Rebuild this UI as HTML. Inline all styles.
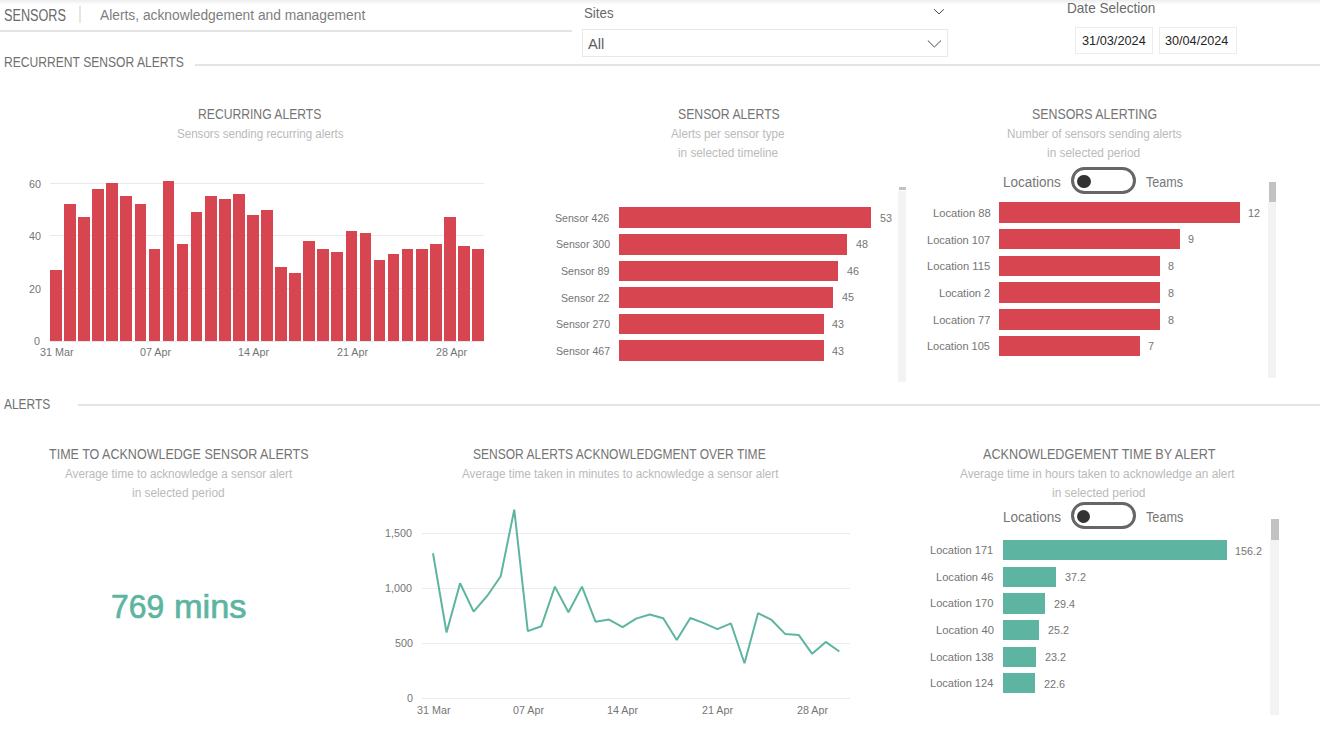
<!DOCTYPE html>
<html><head><meta charset="utf-8"><style>
html,body{margin:0;padding:0;width:1320px;height:740px;overflow:hidden;background:#fff;position:relative}
span{position:absolute;white-space:nowrap;font-family:"Liberation Sans",sans-serif;transform-origin:0 0}
</style></head><body>
<div style="position:absolute;left:0;top:0;width:1320px;height:5px;background:linear-gradient(#eeeeee,#ffffff)"></div>
<div style="position:absolute;left:78.50px;top:6.00px;width:2.00px;height:17.00px;background:#e6e6e6;"></div>
<div style="position:absolute;left:0.00px;top:30.00px;width:572.00px;height:2.00px;background:#e4e4e4;"></div>
<svg style="position:absolute;left:930px;top:5px" width="20" height="12"><polyline points="4.1,4.3 9,8.9 13.9,4.3" fill="none" stroke="#4a4a4a" stroke-width="1"/></svg>
<div style="position:absolute;left:582px;top:28.5px;width:363.5px;height:26.5px;border:1px solid #e8e8e8;background:#fff"></div>
<svg style="position:absolute;left:924px;top:36px" width="22" height="14"><polyline points="3.8,4.5 10.4,11 17,4.5" fill="none" stroke="#4a4a4a" stroke-width="1"/></svg>
<div style="position:absolute;left:1075px;top:27px;width:75.5px;height:25px;border:1px solid #ececec"></div>
<div style="position:absolute;left:1159px;top:27px;width:75.5px;height:25px;border:1px solid #ececec"></div>
<div style="position:absolute;left:195.00px;top:64.00px;width:1125.00px;height:2.00px;background:#e4e4e4;"></div>
<div style="position:absolute;left:78.00px;top:404.00px;width:1242.00px;height:2.00px;background:#e4e4e4;"></div>
<div style="position:absolute;left:50.00px;top:182.80px;width:434.00px;height:1.00px;background:#e9e9e9;"></div>
<div style="position:absolute;left:50.00px;top:235.40px;width:434.00px;height:1.00px;background:#e9e9e9;"></div>
<div style="position:absolute;left:50.00px;top:287.90px;width:434.00px;height:1.00px;background:#e9e9e9;"></div>
<div style="position:absolute;left:50.00px;top:340.50px;width:434.00px;height:1.00px;background:#e9e9e9;"></div>
<div style="position:absolute;left:50.10px;top:270.04px;width:11.70px;height:70.96px;background:#D64550;"></div>
<div style="position:absolute;left:64.17px;top:204.34px;width:11.70px;height:136.66px;background:#D64550;"></div>
<div style="position:absolute;left:78.23px;top:217.48px;width:11.70px;height:123.52px;background:#D64550;"></div>
<div style="position:absolute;left:92.30px;top:188.58px;width:11.70px;height:152.42px;background:#D64550;"></div>
<div style="position:absolute;left:106.37px;top:183.32px;width:11.70px;height:157.68px;background:#D64550;"></div>
<div style="position:absolute;left:120.44px;top:196.46px;width:11.70px;height:144.54px;background:#D64550;"></div>
<div style="position:absolute;left:134.50px;top:204.34px;width:11.70px;height:136.66px;background:#D64550;"></div>
<div style="position:absolute;left:148.57px;top:249.02px;width:11.70px;height:91.98px;background:#D64550;"></div>
<div style="position:absolute;left:162.64px;top:180.69px;width:11.70px;height:160.31px;background:#D64550;"></div>
<div style="position:absolute;left:176.70px;top:243.76px;width:11.70px;height:97.24px;background:#D64550;"></div>
<div style="position:absolute;left:190.77px;top:212.23px;width:11.70px;height:128.77px;background:#D64550;"></div>
<div style="position:absolute;left:204.84px;top:196.46px;width:11.70px;height:144.54px;background:#D64550;"></div>
<div style="position:absolute;left:218.90px;top:199.09px;width:11.70px;height:141.91px;background:#D64550;"></div>
<div style="position:absolute;left:232.97px;top:193.83px;width:11.70px;height:147.17px;background:#D64550;"></div>
<div style="position:absolute;left:247.04px;top:214.86px;width:11.70px;height:126.14px;background:#D64550;"></div>
<div style="position:absolute;left:261.11px;top:209.60px;width:11.70px;height:131.40px;background:#D64550;"></div>
<div style="position:absolute;left:275.17px;top:267.42px;width:11.70px;height:73.58px;background:#D64550;"></div>
<div style="position:absolute;left:289.24px;top:272.67px;width:11.70px;height:68.33px;background:#D64550;"></div>
<div style="position:absolute;left:303.31px;top:241.14px;width:11.70px;height:99.86px;background:#D64550;"></div>
<div style="position:absolute;left:317.37px;top:249.02px;width:11.70px;height:91.98px;background:#D64550;"></div>
<div style="position:absolute;left:331.44px;top:251.65px;width:11.70px;height:89.35px;background:#D64550;"></div>
<div style="position:absolute;left:345.51px;top:230.62px;width:11.70px;height:110.38px;background:#D64550;"></div>
<div style="position:absolute;left:359.57px;top:233.25px;width:11.70px;height:107.75px;background:#D64550;"></div>
<div style="position:absolute;left:373.64px;top:259.53px;width:11.70px;height:81.47px;background:#D64550;"></div>
<div style="position:absolute;left:387.71px;top:254.28px;width:11.70px;height:86.72px;background:#D64550;"></div>
<div style="position:absolute;left:401.78px;top:249.02px;width:11.70px;height:91.98px;background:#D64550;"></div>
<div style="position:absolute;left:415.84px;top:249.02px;width:11.70px;height:91.98px;background:#D64550;"></div>
<div style="position:absolute;left:429.91px;top:243.76px;width:11.70px;height:97.24px;background:#D64550;"></div>
<div style="position:absolute;left:443.98px;top:217.48px;width:11.70px;height:123.52px;background:#D64550;"></div>
<div style="position:absolute;left:458.04px;top:246.39px;width:11.70px;height:94.61px;background:#D64550;"></div>
<div style="position:absolute;left:472.11px;top:249.02px;width:11.70px;height:91.98px;background:#D64550;"></div>
<div style="position:absolute;left:619.10px;top:207.30px;width:252.00px;height:20.70px;background:#D64550;"></div>
<div style="position:absolute;left:619.10px;top:233.90px;width:228.23px;height:20.70px;background:#D64550;"></div>
<div style="position:absolute;left:619.10px;top:260.50px;width:218.72px;height:20.70px;background:#D64550;"></div>
<div style="position:absolute;left:619.10px;top:287.10px;width:213.96px;height:20.70px;background:#D64550;"></div>
<div style="position:absolute;left:619.10px;top:313.70px;width:204.45px;height:20.70px;background:#D64550;"></div>
<div style="position:absolute;left:619.10px;top:340.30px;width:204.45px;height:20.70px;background:#D64550;"></div>
<div style="position:absolute;left:898.00px;top:191.00px;width:8.00px;height:191.00px;background:#f3f3f3;"></div>
<div style="position:absolute;left:899.00px;top:187.00px;width:7.00px;height:3.00px;background:#c2c2c2;"></div>
<div style="position:absolute;left:1070.8px;top:167.2px;width:59px;height:21px;border:3px solid #666;border-radius:14px;background:#fff"></div>
<div style="position:absolute;left:1077.2px;top:174.8px;width:13.5px;height:13.5px;border-radius:50%;background:#333"></div>
<div style="position:absolute;left:999.10px;top:202.20px;width:240.72px;height:20.60px;background:#D64550;"></div>
<div style="position:absolute;left:999.10px;top:228.88px;width:180.54px;height:20.60px;background:#D64550;"></div>
<div style="position:absolute;left:999.10px;top:255.56px;width:160.48px;height:20.60px;background:#D64550;"></div>
<div style="position:absolute;left:999.10px;top:282.24px;width:160.48px;height:20.60px;background:#D64550;"></div>
<div style="position:absolute;left:999.10px;top:308.92px;width:160.48px;height:20.60px;background:#D64550;"></div>
<div style="position:absolute;left:999.10px;top:335.60px;width:140.42px;height:20.60px;background:#D64550;"></div>
<div style="position:absolute;left:1268.00px;top:202.00px;width:8.00px;height:176.00px;background:#f3f3f3;"></div>
<div style="position:absolute;left:1269.00px;top:182.00px;width:7.00px;height:20.00px;background:#c2c2c2;"></div>
<div style="position:absolute;left:422.00px;top:533.30px;width:428.00px;height:1.00px;background:#ececec;"></div>
<div style="position:absolute;left:422.00px;top:588.30px;width:428.00px;height:1.00px;background:#ececec;"></div>
<div style="position:absolute;left:422.00px;top:643.30px;width:428.00px;height:1.00px;background:#ececec;"></div>
<div style="position:absolute;left:422.00px;top:698.30px;width:428.00px;height:1.00px;background:#ececec;"></div>
<svg style="position:absolute;left:0;top:0" width="1320" height="740"><polyline points="433.00,553.27 446.54,632.47 460.09,583.30 473.63,611.68 487.17,595.95 500.72,576.26 514.26,509.60 527.80,631.15 541.34,626.20 554.89,586.60 568.43,612.23 581.97,586.60 595.52,621.69 609.06,619.60 622.60,627.08 636.14,618.61 649.69,614.43 663.23,618.28 676.77,640.06 690.32,617.95 703.86,623.12 717.40,629.17 730.95,623.45 744.49,663.27 758.03,613.22 771.58,619.93 785.12,633.90 798.66,634.89 812.20,653.81 825.75,641.93 839.29,651.50" fill="none" stroke="#5DB5A1" stroke-width="2" stroke-linejoin="bevel"/></svg>
<div style="position:absolute;left:1070.7px;top:502px;width:59px;height:21px;border:3px solid #666;border-radius:14px;background:#fff"></div>
<div style="position:absolute;left:1076.9px;top:509.9px;width:13.5px;height:13.5px;border-radius:50%;background:#333"></div>
<div style="position:absolute;left:1002.90px;top:540.20px;width:223.70px;height:20.20px;background:#5DB5A1;"></div>
<div style="position:absolute;left:1002.90px;top:566.82px;width:53.28px;height:20.20px;background:#5DB5A1;"></div>
<div style="position:absolute;left:1002.90px;top:593.44px;width:42.10px;height:20.20px;background:#5DB5A1;"></div>
<div style="position:absolute;left:1002.90px;top:620.06px;width:36.09px;height:20.20px;background:#5DB5A1;"></div>
<div style="position:absolute;left:1002.90px;top:646.68px;width:33.23px;height:20.20px;background:#5DB5A1;"></div>
<div style="position:absolute;left:1002.90px;top:673.30px;width:32.37px;height:20.20px;background:#5DB5A1;"></div>
<div style="position:absolute;left:1270.00px;top:540.00px;width:9.00px;height:175.00px;background:#f3f3f3;"></div>
<div style="position:absolute;left:1271.00px;top:519.00px;width:8.00px;height:21.00px;background:#c2c2c2;"></div>
<span style="left:3.61px;top:7.50px;font-size:16px;line-height:16px;color:#6a6a6a;font-weight:normal;;transform:scaleX(0.7921)">SENSORS</span>
<span style="left:99.62px;top:7.20px;font-size:15.5px;line-height:15.5px;color:#7e7e7e;font-weight:normal;;transform:scaleX(0.8897)">Alerts, acknowledgement and management</span>
<span style="left:584.26px;top:6.00px;font-size:14.5px;line-height:14.5px;color:#6a6a6a;font-weight:normal;;transform:scaleX(0.9158)">Sites</span>
<span style="left:587.89px;top:36.20px;font-size:15px;line-height:15px;color:#5e5e5e;font-weight:normal;;transform:scaleX(0.9793)">All</span>
<span style="left:1066.71px;top:1.20px;font-size:14.5px;line-height:14.5px;color:#6a6a6a;font-weight:normal;;transform:scaleX(0.9373)">Date Selection</span>
<span style="left:1081.58px;top:33.90px;font-size:13px;line-height:13px;color:#252423;font-weight:normal;;transform:scaleX(0.9793)">31/03/2024</span>
<span style="left:1165.48px;top:33.90px;font-size:13px;line-height:13px;color:#252423;font-weight:normal;;transform:scaleX(0.9730)">30/04/2024</span>
<span style="left:3.66px;top:54.20px;font-size:15.5px;line-height:15.5px;color:#707070;font-weight:normal;;transform:scaleX(0.7809)">RECURRENT SENSOR ALERTS</span>
<span style="left:3.86px;top:396.00px;font-size:15.5px;line-height:15.5px;color:#707070;font-weight:normal;;transform:scaleX(0.7679)">ALERTS</span>
<span style="left:198.25px;top:105.70px;font-size:15px;line-height:15px;color:#747474;font-weight:normal;;transform:scaleX(0.8103)">RECURRING ALERTS</span>
<span style="left:176.68px;top:127.50px;font-size:12px;line-height:12px;color:#bababa;font-weight:normal;;transform:scaleX(0.9644)">Sensors sending recurring alerts</span>
<span style="left:28.62px;top:178.60px;font-size:11px;line-height:11px;color:#757575;font-weight:normal;;transform:scaleX(0.9772)">60</span>
<span style="left:28.62px;top:231.20px;font-size:11px;line-height:11px;color:#757575;font-weight:normal;;transform:scaleX(0.9772)">40</span>
<span style="left:28.62px;top:283.70px;font-size:11px;line-height:11px;color:#757575;font-weight:normal;;transform:scaleX(0.9772)">20</span>
<span style="left:34.49px;top:336.30px;font-size:11px;line-height:11px;color:#757575;font-weight:normal;;transform:scaleX(0.9772)">0</span>
<span style="left:39.97px;top:347.00px;font-size:11px;line-height:11px;color:#757575;font-weight:normal;;transform:scaleX(0.9772)">31 Mar</span>
<span style="left:139.81px;top:347.00px;font-size:11px;line-height:11px;color:#757575;font-weight:normal;;transform:scaleX(0.9772)">07 Apr</span>
<span style="left:238.19px;top:347.00px;font-size:11px;line-height:11px;color:#757575;font-weight:normal;;transform:scaleX(0.9772)">14 Apr</span>
<span style="left:337.27px;top:347.00px;font-size:11px;line-height:11px;color:#757575;font-weight:normal;;transform:scaleX(0.9772)">21 Apr</span>
<span style="left:436.02px;top:347.00px;font-size:11px;line-height:11px;color:#757575;font-weight:normal;;transform:scaleX(0.9772)">28 Apr</span>
<span style="left:678.05px;top:106.20px;font-size:15px;line-height:15px;color:#747474;font-weight:normal;;transform:scaleX(0.8156)">SENSOR ALERTS</span>
<span style="left:670.89px;top:127.60px;font-size:12px;line-height:12px;color:#bababa;font-weight:normal;;transform:scaleX(0.9730)">Alerts per sensor type</span>
<span style="left:678.48px;top:146.70px;font-size:12px;line-height:12px;color:#bababa;font-weight:normal;;transform:scaleX(0.9808)">in selected timeline</span>
<span style="left:555.32px;top:212.75px;font-size:11.5px;line-height:11.5px;color:#757575;font-weight:normal;;transform:scaleX(0.9222)">Sensor 426</span>
<span style="left:879.62px;top:212.65px;font-size:10.5px;line-height:10.5px;color:#757575;font-weight:normal;;transform:scaleX(1.0251)">53</span>
<span style="left:555.52px;top:239.35px;font-size:11.5px;line-height:11.5px;color:#757575;font-weight:normal;;transform:scaleX(0.9180)">Sensor 300</span>
<span style="left:856.18px;top:239.25px;font-size:10.5px;line-height:10.5px;color:#757575;font-weight:normal;;transform:scaleX(1.0251)">48</span>
<span style="left:561.42px;top:265.95px;font-size:11.5px;line-height:11.5px;color:#757575;font-weight:normal;;transform:scaleX(0.9227)">Sensor 89</span>
<span style="left:846.68px;top:265.85px;font-size:10.5px;line-height:10.5px;color:#757575;font-weight:normal;;transform:scaleX(1.0251)">46</span>
<span style="left:561.41px;top:292.55px;font-size:11.5px;line-height:11.5px;color:#757575;font-weight:normal;;transform:scaleX(0.9252)">Sensor 22</span>
<span style="left:841.92px;top:292.45px;font-size:10.5px;line-height:10.5px;color:#757575;font-weight:normal;;transform:scaleX(1.0251)">45</span>
<span style="left:555.52px;top:319.15px;font-size:11.5px;line-height:11.5px;color:#757575;font-weight:normal;;transform:scaleX(0.9180)">Sensor 270</span>
<span style="left:832.41px;top:319.05px;font-size:10.5px;line-height:10.5px;color:#757575;font-weight:normal;;transform:scaleX(1.0251)">43</span>
<span style="left:555.52px;top:345.75px;font-size:11.5px;line-height:11.5px;color:#757575;font-weight:normal;;transform:scaleX(0.9193)">Sensor 467</span>
<span style="left:832.41px;top:345.65px;font-size:10.5px;line-height:10.5px;color:#757575;font-weight:normal;;transform:scaleX(1.0251)">43</span>
<span style="left:1031.73px;top:106.10px;font-size:15px;line-height:15px;color:#747474;font-weight:normal;;transform:scaleX(0.8256)">SENSORS ALERTING</span>
<span style="left:1006.81px;top:128.10px;font-size:12px;line-height:12px;color:#bababa;font-weight:normal;;transform:scaleX(0.9724)">Number of sensors sending alerts</span>
<span style="left:1046.97px;top:146.60px;font-size:12px;line-height:12px;color:#bababa;font-weight:normal;;transform:scaleX(0.9912)">in selected period</span>
<span style="left:1002.85px;top:174.40px;font-size:15.5px;line-height:15.5px;color:#767676;font-weight:normal;;transform:scaleX(0.8700)">Locations</span>
<span style="left:1146.39px;top:174.40px;font-size:15.5px;line-height:15.5px;color:#767676;font-weight:normal;;transform:scaleX(0.8087)">Teams</span>
<span style="left:932.52px;top:207.90px;font-size:11.5px;line-height:11.5px;color:#757575;font-weight:normal;;transform:scaleX(0.9714)">Location 88</span>
<span style="left:1247.62px;top:207.80px;font-size:10.5px;line-height:10.5px;color:#757575;font-weight:normal;;transform:scaleX(1.0251)">12</span>
<span style="left:926.83px;top:234.58px;font-size:11.5px;line-height:11.5px;color:#757575;font-weight:normal;;transform:scaleX(0.9598)">Location 107</span>
<span style="left:1188.14px;top:234.48px;font-size:10.5px;line-height:10.5px;color:#757575;font-weight:normal;;transform:scaleX(1.0251)">9</span>
<span style="left:927.02px;top:261.26px;font-size:11.5px;line-height:11.5px;color:#757575;font-weight:normal;;transform:scaleX(0.9711)">Location 115</span>
<span style="left:1168.13px;top:261.16px;font-size:10.5px;line-height:10.5px;color:#757575;font-weight:normal;;transform:scaleX(1.0251)">8</span>
<span style="left:938.93px;top:287.94px;font-size:11.5px;line-height:11.5px;color:#757575;font-weight:normal;;transform:scaleX(0.9659)">Location 2</span>
<span style="left:1168.13px;top:287.84px;font-size:10.5px;line-height:10.5px;color:#757575;font-weight:normal;;transform:scaleX(1.0251)">8</span>
<span style="left:932.83px;top:314.62px;font-size:11.5px;line-height:11.5px;color:#757575;font-weight:normal;;transform:scaleX(0.9656)">Location 77</span>
<span style="left:1168.13px;top:314.52px;font-size:10.5px;line-height:10.5px;color:#757575;font-weight:normal;;transform:scaleX(1.0251)">8</span>
<span style="left:927.04px;top:341.30px;font-size:11.5px;line-height:11.5px;color:#757575;font-weight:normal;;transform:scaleX(0.9560)">Location 105</span>
<span style="left:1147.92px;top:341.20px;font-size:10.5px;line-height:10.5px;color:#757575;font-weight:normal;;transform:scaleX(1.0251)">7</span>
<span style="left:49.18px;top:446.10px;font-size:15px;line-height:15px;color:#747474;font-weight:normal;;transform:scaleX(0.8348)">TIME TO ACKNOWLEDGE SENSOR ALERTS</span>
<span style="left:65.19px;top:468.20px;font-size:12px;line-height:12px;color:#bababa;font-weight:normal;;transform:scaleX(0.9740)">Average time to acknowledge a sensor alert</span>
<span style="left:132.08px;top:486.80px;font-size:12px;line-height:12px;color:#bababa;font-weight:normal;;transform:scaleX(0.9847)">in selected period</span>
<span style="left:111.27px;top:589.80px;font-size:33.5px;line-height:33.5px;color:#5DB5A1;font-weight:normal;-webkit-text-stroke:0.7px #5DB5A1;transform:scaleX(0.9516)">769</span>
<span style="left:173.62px;top:589.80px;font-size:33.5px;line-height:33.5px;color:#5DB5A1;font-weight:normal;-webkit-text-stroke:0.7px #5DB5A1;transform:scaleX(1.0255)">mins</span>
<span style="left:473.47px;top:446.30px;font-size:15px;line-height:15px;color:#747474;font-weight:normal;;transform:scaleX(0.8016)">SENSOR ALERTS ACKNOWLEDGMENT OVER TIME</span>
<span style="left:462.09px;top:468.20px;font-size:12px;line-height:12px;color:#bababa;font-weight:normal;;transform:scaleX(0.9768)">Average time taken in minutes to acknowledge a sensor alert</span>
<span style="left:385.45px;top:527.90px;font-size:11px;line-height:11px;color:#757575;font-weight:normal;;transform:scaleX(0.9772)">1,500</span>
<span style="left:385.45px;top:582.90px;font-size:11px;line-height:11px;color:#757575;font-weight:normal;;transform:scaleX(0.9772)">1,000</span>
<span style="left:394.78px;top:637.90px;font-size:11px;line-height:11px;color:#757575;font-weight:normal;;transform:scaleX(0.9772)">500</span>
<span style="left:406.59px;top:692.90px;font-size:11px;line-height:11px;color:#757575;font-weight:normal;;transform:scaleX(0.9772)">0</span>
<span style="left:416.72px;top:705.00px;font-size:11px;line-height:11px;color:#757575;font-weight:normal;;transform:scaleX(0.9772)">31 Mar</span>
<span style="left:512.56px;top:705.00px;font-size:11px;line-height:11px;color:#757575;font-weight:normal;;transform:scaleX(0.9772)">07 Apr</span>
<span style="left:606.94px;top:705.00px;font-size:11px;line-height:11px;color:#757575;font-weight:normal;;transform:scaleX(0.9772)">14 Apr</span>
<span style="left:702.02px;top:705.00px;font-size:11px;line-height:11px;color:#757575;font-weight:normal;;transform:scaleX(0.9772)">21 Apr</span>
<span style="left:796.77px;top:705.00px;font-size:11px;line-height:11px;color:#757575;font-weight:normal;;transform:scaleX(0.9772)">28 Apr</span>
<span style="left:983.33px;top:446.30px;font-size:15px;line-height:15px;color:#747474;font-weight:normal;;transform:scaleX(0.8430)">ACKNOWLEDGEMENT TIME BY ALERT</span>
<span style="left:959.88px;top:468.20px;font-size:12px;line-height:12px;color:#bababa;font-weight:normal;;transform:scaleX(0.9833)">Average time in hours taken to acknowledge an alert</span>
<span style="left:1052.17px;top:486.80px;font-size:12px;line-height:12px;color:#bababa;font-weight:normal;;transform:scaleX(0.9934)">in selected period</span>
<span style="left:1002.74px;top:509.10px;font-size:15.5px;line-height:15.5px;color:#767676;font-weight:normal;;transform:scaleX(0.8747)">Locations</span>
<span style="left:1145.88px;top:509.10px;font-size:15.5px;line-height:15.5px;color:#767676;font-weight:normal;;transform:scaleX(0.8198)">Teams</span>
<span style="left:930.04px;top:545.10px;font-size:11.5px;line-height:11.5px;color:#757575;font-weight:normal;;transform:scaleX(0.9594)">Location 171</span>
<span style="left:1234.60px;top:545.60px;font-size:10.5px;line-height:10.5px;color:#757575;font-weight:normal;;transform:scaleX(1.0251)">156.2</span>
<span style="left:935.93px;top:571.72px;font-size:11.5px;line-height:11.5px;color:#757575;font-weight:normal;;transform:scaleX(0.9666)">Location 46</span>
<span style="left:1064.83px;top:572.22px;font-size:10.5px;line-height:10.5px;color:#757575;font-weight:normal;;transform:scaleX(1.0251)">37.2</span>
<span style="left:929.63px;top:598.34px;font-size:11.5px;line-height:11.5px;color:#757575;font-weight:normal;;transform:scaleX(0.9633)">Location 170</span>
<span style="left:1053.71px;top:598.84px;font-size:10.5px;line-height:10.5px;color:#757575;font-weight:normal;;transform:scaleX(1.0251)">29.4</span>
<span style="left:935.52px;top:624.96px;font-size:11.5px;line-height:11.5px;color:#757575;font-weight:normal;;transform:scaleX(0.9732)">Location 40</span>
<span style="left:1047.70px;top:625.46px;font-size:10.5px;line-height:10.5px;color:#757575;font-weight:normal;;transform:scaleX(1.0251)">25.2</span>
<span style="left:929.63px;top:651.58px;font-size:11.5px;line-height:11.5px;color:#757575;font-weight:normal;;transform:scaleX(0.9637)">Location 138</span>
<span style="left:1044.83px;top:652.08px;font-size:10.5px;line-height:10.5px;color:#757575;font-weight:normal;;transform:scaleX(1.0251)">23.2</span>
<span style="left:929.63px;top:678.20px;font-size:11.5px;line-height:11.5px;color:#757575;font-weight:normal;;transform:scaleX(0.9608)">Location 124</span>
<span style="left:1043.98px;top:678.70px;font-size:10.5px;line-height:10.5px;color:#757575;font-weight:normal;;transform:scaleX(1.0251)">22.6</span>
</body></html>
